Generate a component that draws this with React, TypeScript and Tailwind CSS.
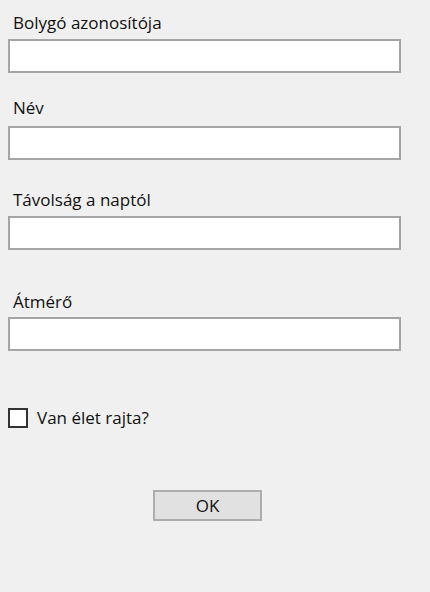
import React from "react";

function Field({ label, labelMt, inputMt }: { label: string; labelMt: string; inputMt: string }) {
  return (
    <div>
      <div className={`${labelMt} ml-[13px] h-[20px] leading-[20px] text-[17px] text-[#111] whitespace-nowrap`}>{label}</div>
      <div className={`${inputMt} ml-[8px] w-[393px] h-[34px] bg-white border-2 border-[#a5a5a5]`} />
    </div>
  );
}

export default function App() {
  return (
    <div
      className="w-[430px] h-[592px] bg-[#f0f0f0] overflow-hidden"
      style={{ fontFamily: '"Open Sans", "Noto Sans", sans-serif' }}
    >
      <Field label="Bolygó azonosítója" labelMt="mt-[13px]" inputMt="mt-[6px]" />
      <Field label="Név" labelMt="mt-[25px]" inputMt="mt-[8px]" />
      <Field label="Távolság a naptól" labelMt="mt-[30px]" inputMt="mt-[6px]" />
      <Field label="Átmérő" labelMt="mt-[42px]" inputMt="mt-[5px]" />
      <div className="mt-[57px] ml-[8px] flex items-center h-[20px]">
        <div className="w-[20px] h-[20px] bg-white border-2 border-[#333333]" />
        <span className="ml-[9px] text-[17px] leading-[20px] text-[#111] whitespace-nowrap">Van élet rajta?</span>
      </div>
      <div className="mt-[62px] flex">
        <button className="ml-[153px] w-[109px] h-[31px] bg-[#e1e1e1] border-2 border-[#adadad] text-[17px] text-[#111] leading-none">
          OK
        </button>
      </div>
    </div>
  );
}
